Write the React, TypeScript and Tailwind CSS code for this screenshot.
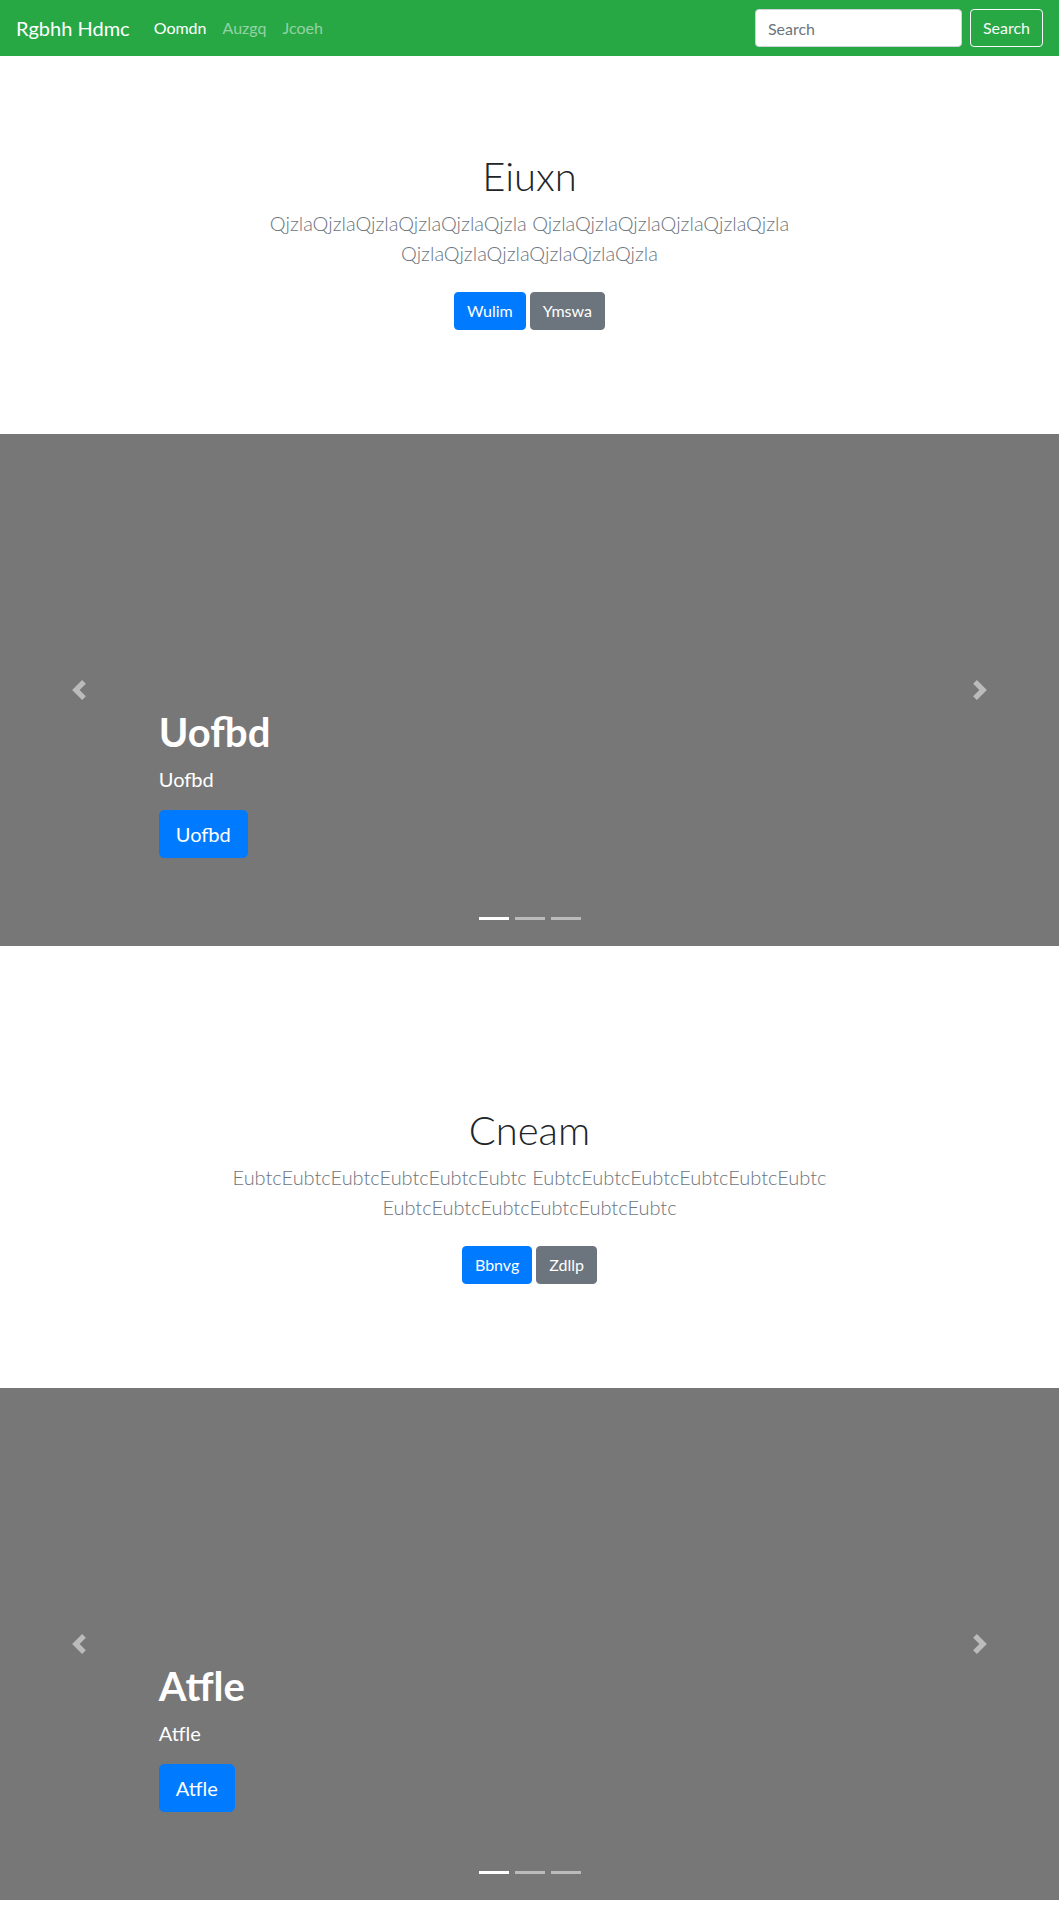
import React from 'react'

const sans = "font-['Lato','Liberation_Sans',sans-serif]"

function Chevron({ dir }: { dir: 'prev' | 'next' }) {
  return (
    <svg width="20" height="20" viewBox="0 0 8 8" fill="#fff">
      {dir === 'prev' ? (
        <path d="M5.25 0l-4 4 4 4 1.5-1.5-2.5-2.5 2.5-2.5-1.5-1.5z" />
      ) : (
        <path d="M2.75 0l-1.5 1.5 2.5 2.5-2.5 2.5 1.5 1.5 4-4-4-4z" />
      )}
    </svg>
  )
}

interface HeroProps {
  title: string
  text: string
  primary: string
  secondary: string
}

function Hero({ title, text, primary, secondary }: HeroProps) {
  return (
    <section className="bg-white py-24 text-center">
      <div className="mx-auto max-w-[640px] px-[15px]">
        <h1 className="mb-2 text-[40px] leading-[48px] font-light text-[#212529]">{title}</h1>
        <p className="mb-4 text-[20px] leading-[30px] font-light text-[#6c757d]">{text}</p>
        <div className="flex justify-center gap-1 py-2">
          <button className="h-[38px] rounded-[4px] border border-[#007bff] bg-[#007bff] px-3 text-base text-white">
            {primary}
          </button>
          <button className="h-[38px] rounded-[4px] border border-[#6c757d] bg-[#6c757d] px-3 text-base text-white">
            {secondary}
          </button>
        </div>
      </div>
    </section>
  )
}

function Carousel({ label }: { label: string }) {
  return (
    <div className="relative mb-16 h-[512px] overflow-hidden bg-[#777]">
      {/* caption */}
      <div className="absolute bottom-[88px] left-[15%] right-[15%] text-left text-white">
        <h1 className="mb-2 text-[40px] leading-[48px] font-bold">{label}</h1>
        <p className="mb-4 text-[20px] leading-[30px]">{label}</p>
        <button className="h-[48px] rounded-[5px] border border-[#007bff] bg-[#007bff] px-4 text-[20px] leading-[30px] text-white">
          {label}
        </button>
      </div>

      <a className="absolute inset-y-0 left-0 flex w-[15%] items-center justify-center opacity-50">
        <Chevron dir="prev" />
      </a>
      <a className="absolute inset-y-0 right-0 flex w-[15%] items-center justify-center opacity-50">
        <Chevron dir="next" />
      </a>

      <div className="absolute bottom-[26px] left-[15%] right-[15%] flex justify-center gap-[6px]">
        <span className="h-[3px] w-[30px] bg-white" />
        <span className="h-[3px] w-[30px] bg-white opacity-50" />
        <span className="h-[3px] w-[30px] bg-white opacity-50" />
      </div>
    </div>
  )
}

export default function App() {
  const q = 'QjzlaQjzlaQjzlaQjzlaQjzlaQjzla'
  const e = 'EubtcEubtcEubtcEubtcEubtcEubtc'

  return (
    <div className={`${sans} min-h-screen bg-white text-[#212529]`}>
      <nav className="flex h-14 items-center bg-[#28a745] px-4">
        <a className="mr-4 py-[5px] text-[20px] leading-[30px] text-white">Rgbhh Hdmc</a>
        <ul className="flex text-base">
          <li><a className="block px-2 py-2 text-white">Oomdn</a></li>
          <li><a className="block px-2 py-2 text-white/50">Auzgq</a></li>
          <li><a className="block px-2 py-2 text-white/50">Jcoeh</a></li>
        </ul>
        <form className="ml-auto flex items-center">
          <input
            type="text"
            placeholder="Search"
            className="mr-2 h-[38px] w-[207px] rounded-[4px] border border-[#ced4da] bg-white px-3 text-base text-[#495057] outline-none placeholder:text-[#6c757d]"
          />
          <button type="button" className="h-[38px] rounded-[4px] border border-[#f8f9fa] px-3 text-base text-[#f8f9fa]">
            Search
          </button>
        </form>
      </nav>

      <Hero title="Eiuxn" text={`${q} ${q} ${q}`} primary="Wulim" secondary="Ymswa" />
      <Carousel label="Uofbd" />

      <Hero title="Cneam" text={`${e} ${e} ${e}`} primary="Bbnvg" secondary="Zdllp" />
      <Carousel label="Atfle" />
    </div>
  )
}
